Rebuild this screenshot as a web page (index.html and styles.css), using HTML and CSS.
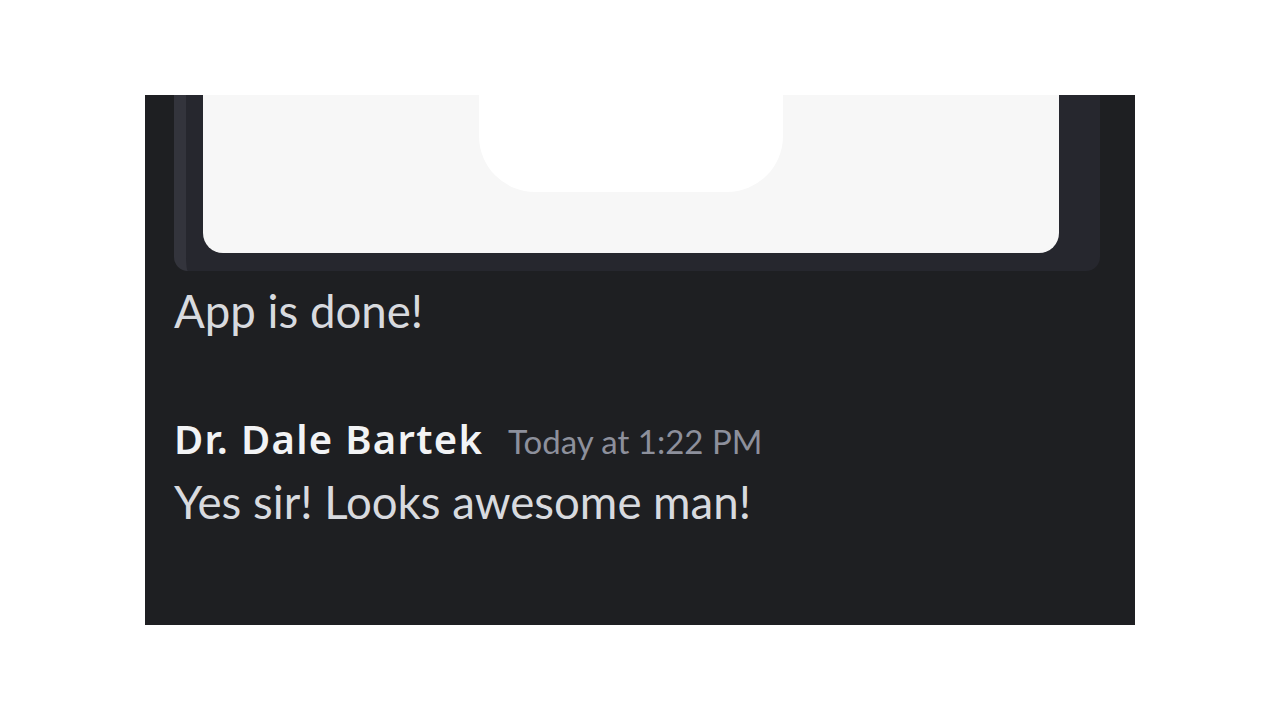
FILE: index.html
```html
<!DOCTYPE html>
<html lang="en">
<head>
<meta charset="utf-8">
<title>Chat</title>
<link rel="stylesheet" href="styles.css">
</head>
<body>
<div class="panel">
  <div class="embed">
    <div class="image">
      <div class="notch"></div>
    </div>
  </div>
  <div class="msg-text first">App is done!</div>
  <div class="header">
    <span class="name">Dr. Dale Bartek</span>
    <span class="time">Today at 1:22 PM</span>
  </div>
  <div class="msg-text">Yes sir! Looks awesome man!</div>
</div>
</body>
</html>
```
FILE: styles.css
```css
html, body {
  margin: 0;
  padding: 0;
  background: #ffffff;
}
body {
  font-family: "Lato", "Noto Sans", sans-serif;
}
.panel {
  width: 990px;
  height: 530px;
  margin: 95px 0 0 145px;
  background: #1e1f22;
  padding: 0 35px 0 29px;
  box-sizing: border-box;
  overflow: hidden;
}
.embed {
  height: 176px;
  background: #26272e;
  border-left: 12px solid #33343c;
  border-radius: 0 0 14px 14px;
  padding: 0 41px 18px 17px;
  box-sizing: border-box;
}
.image {
  height: 158px;
  background: #f7f7f7;
  border-radius: 0 0 20px 20px;
  display: flex;
  justify-content: center;
}
.notch {
  width: 304px;
  height: 97px;
  background: #ffffff;
  border-radius: 0 0 56px 56px;
}
.msg-text {
  font-size: 45.6px;
  line-height: 64px;
  color: #d8dadf;
  font-weight: 400;
}
.msg-text.first {
  margin-top: 9px;
  line-height: 62px;
}
.header {
  margin-top: 66px;
  font-size: 38px;
  line-height: 62px;
  white-space: nowrap;
}
.name {
  font-family: "Noto Sans", "Lato", sans-serif;
  font-size: 40px;
  line-height: 1;
  font-weight: 600;
  letter-spacing: 1.3px;
  color: #f2f3f5;
}
.time {
  font-size: 33px;
  line-height: 1;
  color: #8d909c;
  margin-left: 15px;
}
```
